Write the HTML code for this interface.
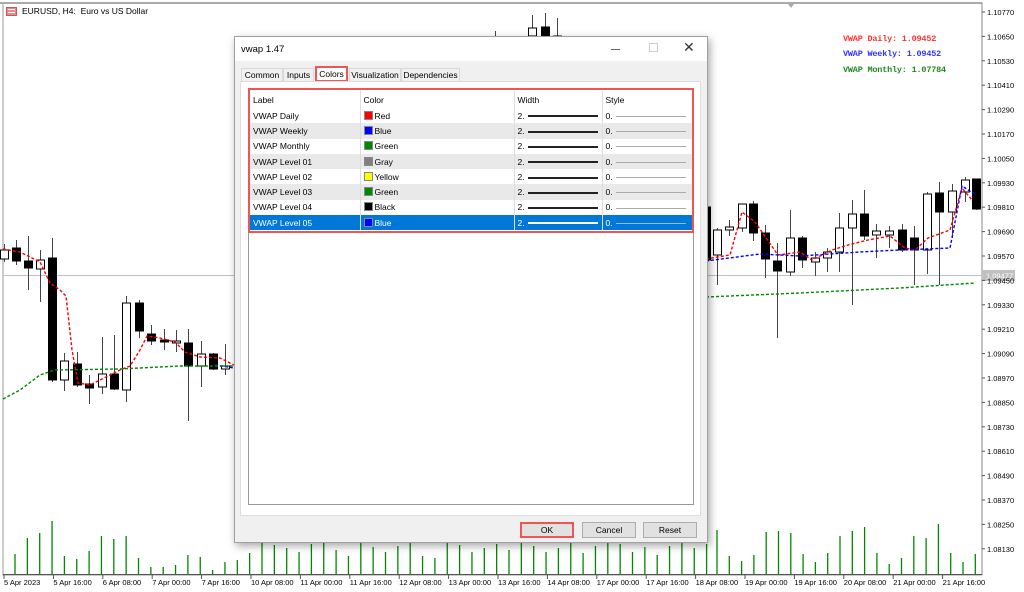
<!DOCTYPE html>
<html><head><meta charset="utf-8"><style>
*{margin:0;padding:0;box-sizing:border-box}
body{width:1024px;height:592px;background:#fff;position:relative;overflow:hidden;font-family:"Liberation Sans",sans-serif;}
.t{position:absolute;white-space:nowrap}
#dlg{position:absolute;left:234px;top:36px;width:474px;height:507px;background:#f0f0f0;border:1px solid #a0a0a0;box-shadow:2px 3px 8px rgba(0,0,0,.35);font-size:9px;color:#000}
.tab{position:absolute;top:31px;height:14px;border:1px solid #d9d9d9;border-bottom:none;background:#f0f0f0;font-size:8.5px;line-height:13px;text-align:center}
table{border-collapse:collapse;font-size:8.5px}
td{height:15.3px;padding:0 3px;border-right:1px solid #ddd;white-space:nowrap}
tr.g td{background:#e9e9e9}
tr.s td{background:#0078d7;color:#fff}
.sw{display:inline-block;width:9px;height:9px;border:1px solid #888;vertical-align:-1px;margin-right:2px}
.ln{display:inline-block;vertical-align:middle;margin-left:3px}
.btn{position:absolute;top:485px;height:16px;background:#e1e1e1;border:1px solid #adadad;font-size:8.5px;text-align:center;line-height:14px}
.lg{font-size:8.5px;font-family:'Liberation Mono',monospace;letter-spacing:-.2px;font-weight:bold}
</style></head><body>
<svg id="ch" width="1024" height="592" style="position:absolute;left:0;top:0">
<rect x="3" y="3" width="979" height="572" fill="none" stroke="#999" stroke-width="1"/>
<line x1="0" y1="3" x2="982" y2="3" stroke="#aaa" stroke-width="2"/>
<line x1="982" y1="3" x2="982" y2="575" stroke="#888"/>
<line x1="3" y1="574.5" x2="982" y2="574.5" stroke="#555"/>
<line x1="3" y1="275.5" x2="982" y2="275.5" stroke="#c0c0c0"/>
<rect x="983" y="270" width="32" height="11" fill="#c0c0c0"/>
<text x="986" y="278.5" font-size="7.5" fill="#fff" font-family="Liberation Sans">1.09477</text>
<polygon points="788,4 794,4 791,8" fill="#aaa"/>
<g id="cd"></g><g id="vol"></g>
<polyline fill="none" stroke="#f00" stroke-width="1.4" stroke-dasharray="3,2" points="3,249 20,252 40,262 50,283 60,290 66,296 72,350 78,383 90,385 110,375 120,370 130,366 140,350 147,336 160,338 175,342 185,352 200,357 220,358 234,365"/>
<polyline fill="none" stroke="#00f" stroke-width="1.4" stroke-dasharray="3,2" points="215,365 234,368"/>
<polyline fill="none" stroke="#080" stroke-width="1.4" stroke-dasharray="3,2" points="3,399 20,390 40,375 55,370 120,369 180,366 234,366"/>
<polyline fill="none" stroke="#f00" stroke-width="1.4" stroke-dasharray="3,2" points="706,259 730,255 742,212 755,222 778,255 800,252 812,260 832,250 848,245 868,240 890,236 905,248 915,250 928,238 950,230 962,188 972,200"/>
<polyline fill="none" stroke="#00f" stroke-width="1.4" stroke-dasharray="3,2" points="706,261 760,254 800,256 860,252 900,250 950,248 962,186 976,195"/>
<polyline fill="none" stroke="#080" stroke-width="1.4" stroke-dasharray="3,2" points="706,297 800,293 900,288 975,283"/>
<g id="ax" font-size="7.5" font-family="Liberation Sans" fill="#000"></g>
</svg>
<div class="t" style="left:6px;top:7px;width:11px;height:9px;background:#e88;border:1px solid #c55"></div>
<div class="t" style="left:8px;top:9px;width:7px;height:1px;background:#fff;box-shadow:0 3px 0 #fff"></div>
<div class="t" style="left:22px;top:6px;font-size:8.5px">EURUSD, H4:&nbsp; Euro vs US Dollar</div>
<div class="t lg" style="left:843px;top:34px;color:#f33">VWAP Daily: 1.09452</div>
<div class="t lg" style="left:843px;top:49px;color:#33f">VWAP Weekly: 1.09452</div>
<div class="t lg" style="left:843px;top:65px;color:#282">VWAP Monthly: 1.07784</div>

<div id="dlg">
<div style="position:absolute;left:0;top:0;width:472px;height:24px;background:#fff"></div>
<div class="t" style="left:6px;top:7px;font-size:9.5px">vwap 1.47</div>
<div class="t" style="left:376px;top:12px;width:9px;height:1px;background:#666"></div>
<div class="t" style="left:414px;top:6px;width:9px;height:9px;border:1px solid #ccc"></div>
<div class="t" style="left:448px;top:2px;font-size:14px;color:#333">✕</div>
<div class="tab" style="left:6px;width:42px">Common</div>
<div class="tab" style="left:48px;width:31px">Inputs</div>
<div class="tab" style="left:80px;top:29px;height:16px;width:33px;background:#fff;border:2px solid #e55;line-height:12px">Colors</div>
<div class="tab" style="left:114px;width:52px">Visualization</div>
<div class="tab" style="left:166px;width:59px">Dependencies</div>
<div style="position:absolute;left:5px;top:44px;width:461px;height:435px;background:#fff;border:1px solid #ddd"></div>
<div style="position:absolute;left:13px;top:51px;width:446px;height:417px;border:1px solid #999;background:#fff"></div>
<table style="position:absolute;left:15px;top:54px;width:442px">
<tr><td style="width:110px;height:17px">Label</td><td style="width:154px">Color</td><td style="width:88px">Width</td><td style="border:none">Style</td></tr>
<tr><td>VWAP Daily</td><td><span class="sw" style="background:#f00"></span>Red</td><td>2.<span class="ln" style="width:70px;height:2px;background:#222"></span></td><td style="border:none">0.<span class="ln" style="width:70px;height:1px;background:#aaa"></span></td></tr>
<tr class="g"><td>VWAP Weekly</td><td><span class="sw" style="background:#00f"></span>Blue</td><td>2.<span class="ln" style="width:70px;height:2px;background:#222"></span></td><td style="border:none">0.<span class="ln" style="width:70px;height:1px;background:#aaa"></span></td></tr>
<tr><td>VWAP Monthly</td><td><span class="sw" style="background:#080"></span>Green</td><td>2.<span class="ln" style="width:70px;height:2px;background:#222"></span></td><td style="border:none">0.<span class="ln" style="width:70px;height:1px;background:#aaa"></span></td></tr>
<tr class="g"><td>VWAP Level 01</td><td><span class="sw" style="background:#808080"></span>Gray</td><td>2.<span class="ln" style="width:70px;height:2px;background:#222"></span></td><td style="border:none">0.<span class="ln" style="width:70px;height:1px;background:#aaa"></span></td></tr>
<tr><td>VWAP Level 02</td><td><span class="sw" style="background:#ff0"></span>Yellow</td><td>2.<span class="ln" style="width:70px;height:2px;background:#222"></span></td><td style="border:none">0.<span class="ln" style="width:70px;height:1px;background:#aaa"></span></td></tr>
<tr class="g"><td>VWAP Level 03</td><td><span class="sw" style="background:#080"></span>Green</td><td>2.<span class="ln" style="width:70px;height:2px;background:#222"></span></td><td style="border:none">0.<span class="ln" style="width:70px;height:1px;background:#aaa"></span></td></tr>
<tr><td>VWAP Level 04</td><td><span class="sw" style="background:#000"></span>Black</td><td>2.<span class="ln" style="width:70px;height:2px;background:#222"></span></td><td style="border:none">0.<span class="ln" style="width:70px;height:1px;background:#aaa"></span></td></tr>
<tr class="s"><td>VWAP Level 05</td><td><span class="sw" style="background:#00f"></span>Blue</td><td>2.<span class="ln" style="width:70px;height:2px;background:#fff"></span></td><td style="border:none">0.<span class="ln" style="width:70px;height:1px;background:#9bd"></span></td></tr>
</table>
<div style="position:absolute;left:13px;top:51px;width:446px;height:145px;border:2px solid #e55"></div>
<div class="btn" style="left:285px;width:54px;border:2px solid #e55;line-height:12px">OK</div>
<div class="btn" style="left:347px;width:54px">Cancel</div>
<div class="btn" style="left:408px;width:54px">Reset</div>
</div>
<script>
var ns="http://www.w3.org/2000/svg";
function el(g,t,a){var e=document.createElementNS(ns,t);for(var k in a)e.setAttribute(k,a[k]);document.getElementById(g).appendChild(e);return e;}
var C=[[4,1,250,259,244,262],[16,0,248,261,240,265],[28,0,261,268,236,290],[40,1,260,269,250,302],[52,0,258,380,238,382],[64,1,361,380,353,391],[77,0,364,385,352,387],[89,0,384,388,375,404],[102,1,374,387,337,394],[114,0,374,389,335,390],[126,1,303,390,296,402],[139,0,303,331,300,338],[151,0,334,341,325,345],[164,0,340,342,329,350],[176,1,341,343,330,352],[188,0,343,366,329,421],[201,1,354,366,341,387],[213,0,354,369,353,370],[225,1,366,369,344,375],
[495,1,40,40,31,40],[532,1,28,36,15,36],[545,0,27,36,13,36],[557,1,36,36,18,36],
[706,0,207,260,200,262],[717,1,230,255,228,285],[729,1,227,230,220,236],[742,1,204,228,204,232],[753,0,204,233,201,241],[765,0,233,259,225,278],[777,0,261,271,243,338],[790,1,238,272,210,276],[802,0,238,260,236,268],[815,1,258,262,252,276],[827,1,252,258,248,272],[839,1,228,252,213,272],[852,1,214,228,200,305],[864,0,214,236,190,240],[876,1,231,235,224,258],[889,1,231,235,226,248],[902,0,230,250,224,252],[914,0,238,250,226,285],[927,1,194,250,192,274],[939,0,193,212,182,285],[952,1,191,212,184,238],[965,1,180,192,177,202],[976,0,179,209,179,210]];
C.forEach(function(c){el("cd","line",{x1:c[0]+.5,y1:c[4],x2:c[0]+.5,y2:c[5],stroke:"#444","stroke-width":1});
el("cd","rect",{x:c[0]-3.5,y:c[2],width:8,height:Math.max(1,c[3]-c[2]),fill:c[1]?"#fff":"#000",stroke:"#000","stroke-width":1});});
var L=[554,538,533,521,556,559,551,536,539,536,558,567,567,565,555,557,570,562,560,553,540,545,548,552,544,538,550,556,541,547,552,546,540,556,558,542,545,552,548,544,550,542,546,552,548,541,553,546,538,544,552,547,555,546,540,548,544];
for(var i=0;i<L.length;i++){var x=15+i*12.35;if(x>712)break;el("vol","line",{x1:x,y1:L[i],x2:x,y2:574,stroke:"#080","stroke-width":1.3});}
var R=[530,556,561,555,532,531,533,554,562,553,536,531,527,553,564,558,536,538,524,553,562,554];
R.forEach(function(v,j){var x=717+j*12.3;el("vol","line",{x1:x,y1:v,x2:x,y2:574,stroke:"#080","stroke-width":1.3});});
var P=["1.10770","1.10650","1.10530","1.10410","1.10290","1.10170","1.10050","1.09930","1.09810","1.09690","1.09570","1.09450","1.09330","1.09210","1.09090","1.08970","1.08850","1.08730","1.08610","1.08490","1.08370","1.08250","1.08130"];
P.forEach(function(p,i){var y=12+i*24.4;el("ax","line",{x1:982,y1:y,x2:985,y2:y,stroke:"#555"});var t=el("ax","text",{x:987,y:y+3});t.textContent=p;});
var T=["5 Apr 2023","5 Apr 16:00","6 Apr 08:00","7 Apr 00:00","7 Apr 16:00","10 Apr 08:00","11 Apr 00:00","11 Apr 16:00","12 Apr 08:00","13 Apr 00:00","13 Apr 16:00","14 Apr 08:00","17 Apr 00:00","17 Apr 16:00","18 Apr 08:00","19 Apr 00:00","19 Apr 16:00","20 Apr 08:00","21 Apr 00:00","21 Apr 16:00"];
T.forEach(function(s,i){var x=4+i*49.4;el("ax","line",{x1:x,y1:575,x2:x,y2:579,stroke:"#555"});var t=el("ax","text",{x:x,y:585});t.textContent=s;});
</script>
</body></html>
